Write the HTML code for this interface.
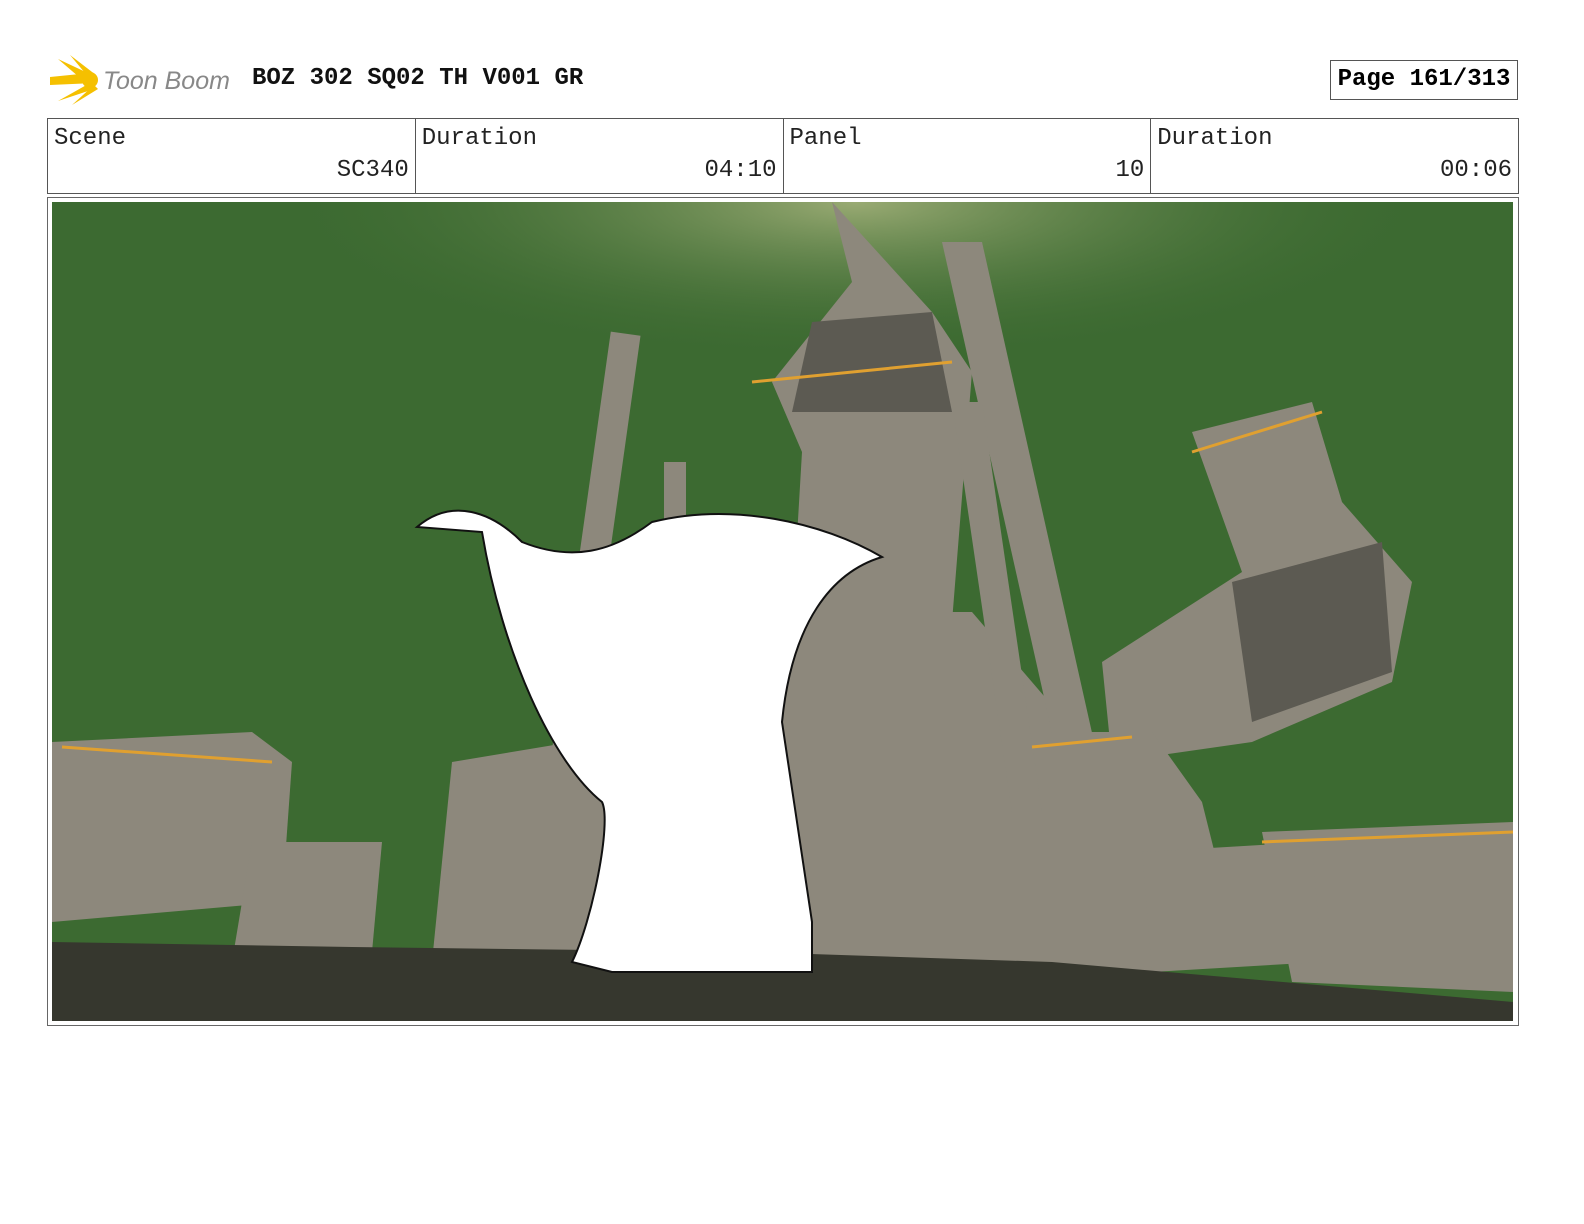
<!DOCTYPE html>
<html><head><meta charset="utf-8"><style>
body{margin:0;background:#fff;width:1584px;height:1224px;position:relative;overflow:hidden;font-family:"Liberation Mono",monospace}
.abs{position:absolute}
.title{left:252px;top:65px;font-weight:bold;font-size:24px;color:#111}
.page{left:1330px;top:60px;width:188px;height:40px;border:1px solid #555;box-sizing:border-box;font-weight:bold;font-size:24px;line-height:38px;text-align:center}
table{position:absolute;left:47px;top:118px;width:1472px;height:76px;border-collapse:collapse}
td{border:1px solid #555;width:25%;vertical-align:top;padding:0;position:relative;font-size:24px;color:#222}
td .l{position:absolute;left:6px;top:6px}
td .r{position:absolute;right:6px;top:38px}
.frame{left:47px;top:197px;width:1472px;height:829px;border:1px solid #666;box-sizing:border-box}
</style></head><body>
<svg class="abs" style="left:50px;top:55px" width="190" height="52">
<g fill="#f5c000"><polygon points="0,22 40,18 45,28 0,30"/><polygon points="8,4 42,20 36,28"/><polygon points="20,0 46,20 40,24"/><polygon points="8,46 40,28 44,34"/><polygon points="22,50 44,30 48,34"/><circle cx="40" cy="25" r="8"/></g>
<text x="53" y="34" font-family="Liberation Sans" font-style="italic" font-size="25" fill="#888">Toon Boom</text></svg>
<div class="abs title">BOZ 302 SQ02 TH V001 GR</div>
<div class="abs page">Page 161/313</div>
<table><tr><td><span class="l">Scene</span><span class="r">SC340</span></td><td><span class="l">Duration</span><span class="r">04:10</span></td><td><span class="l">Panel</span><span class="r">10</span></td><td><span class="l">Duration</span><span class="r">00:06</span></td></tr></table>
<div class="abs frame"></div>
<svg class="abs" style="left:52px;top:202px" width="1461" height="819" viewBox="0 0 1461 819">
<rect width="1461" height="819" fill="#3c6a31"/>
<radialGradient id="g" cx="0.55" cy="0" r="0.4"><stop offset="0" stop-color="#d8d6a0" stop-opacity=".6"/><stop offset="1" stop-color="#3c6a31" stop-opacity="0"/></radialGradient>
<rect width="1461" height="400" fill="url(#g)"/>
<g fill="#8d887c">
<polygon points="780,0 800,80 720,180 750,250 740,420 900,420 920,170 880,110"/>
<polygon points="730,410 920,410 1100,620 1110,780 700,780"/>
<polygon points="400,560 520,540 760,560 760,760 380,760"/>
<rect x="535" y="130" width="30" height="430" transform="rotate(8 550 300)"/>
<rect x="612" y="260" width="22" height="300"/>
<polygon points="890,40 930,40 1060,620 1020,620"/>
<polygon points="900,200 930,200 990,610 960,610"/>
<polygon points="1140,230 1260,200 1290,300 1360,380 1340,480 1200,540 1060,560 1050,460 1190,370"/>
<polygon points="1000,530 1100,530 1150,600 1180,720 1000,720"/>
<polygon points="1210,630 1461,620 1461,790 1240,780"/>
<polygon points="0,540 200,530 240,560 230,700 0,720"/>
<polygon points="200,640 330,640 320,750 180,760"/>
<polygon points="1090,650 1260,640 1270,760 1100,770"/>
</g>
<g fill="#5c5a52"><polygon points="760,120 880,110 900,210 740,210"/><polygon points="1180,380 1330,340 1340,470 1200,520"/></g>
<polygon points="0,740 300,745 700,750 1000,760 1461,800 1461,819 0,819" fill="#36372e"/>
<g fill="none" stroke="#e0a030" stroke-width="3"><path d="M10,545 L220,560"/><path d="M700,180 L900,160"/><path d="M1140,250 L1270,210"/><path d="M1210,640 L1461,630"/><path d="M980,545 L1080,535"/></g>
<path d="M365,325 C400,295 440,310 470,340 C520,360 560,350 600,320 C680,300 770,320 830,355 C780,370 740,420 730,520 L760,720 L760,770 L560,770 L520,760 C540,720 560,620 550,600 C500,560 450,450 430,330 Z" fill="#fff" stroke="#111" stroke-width="2"/>
</svg>
</body></html>
